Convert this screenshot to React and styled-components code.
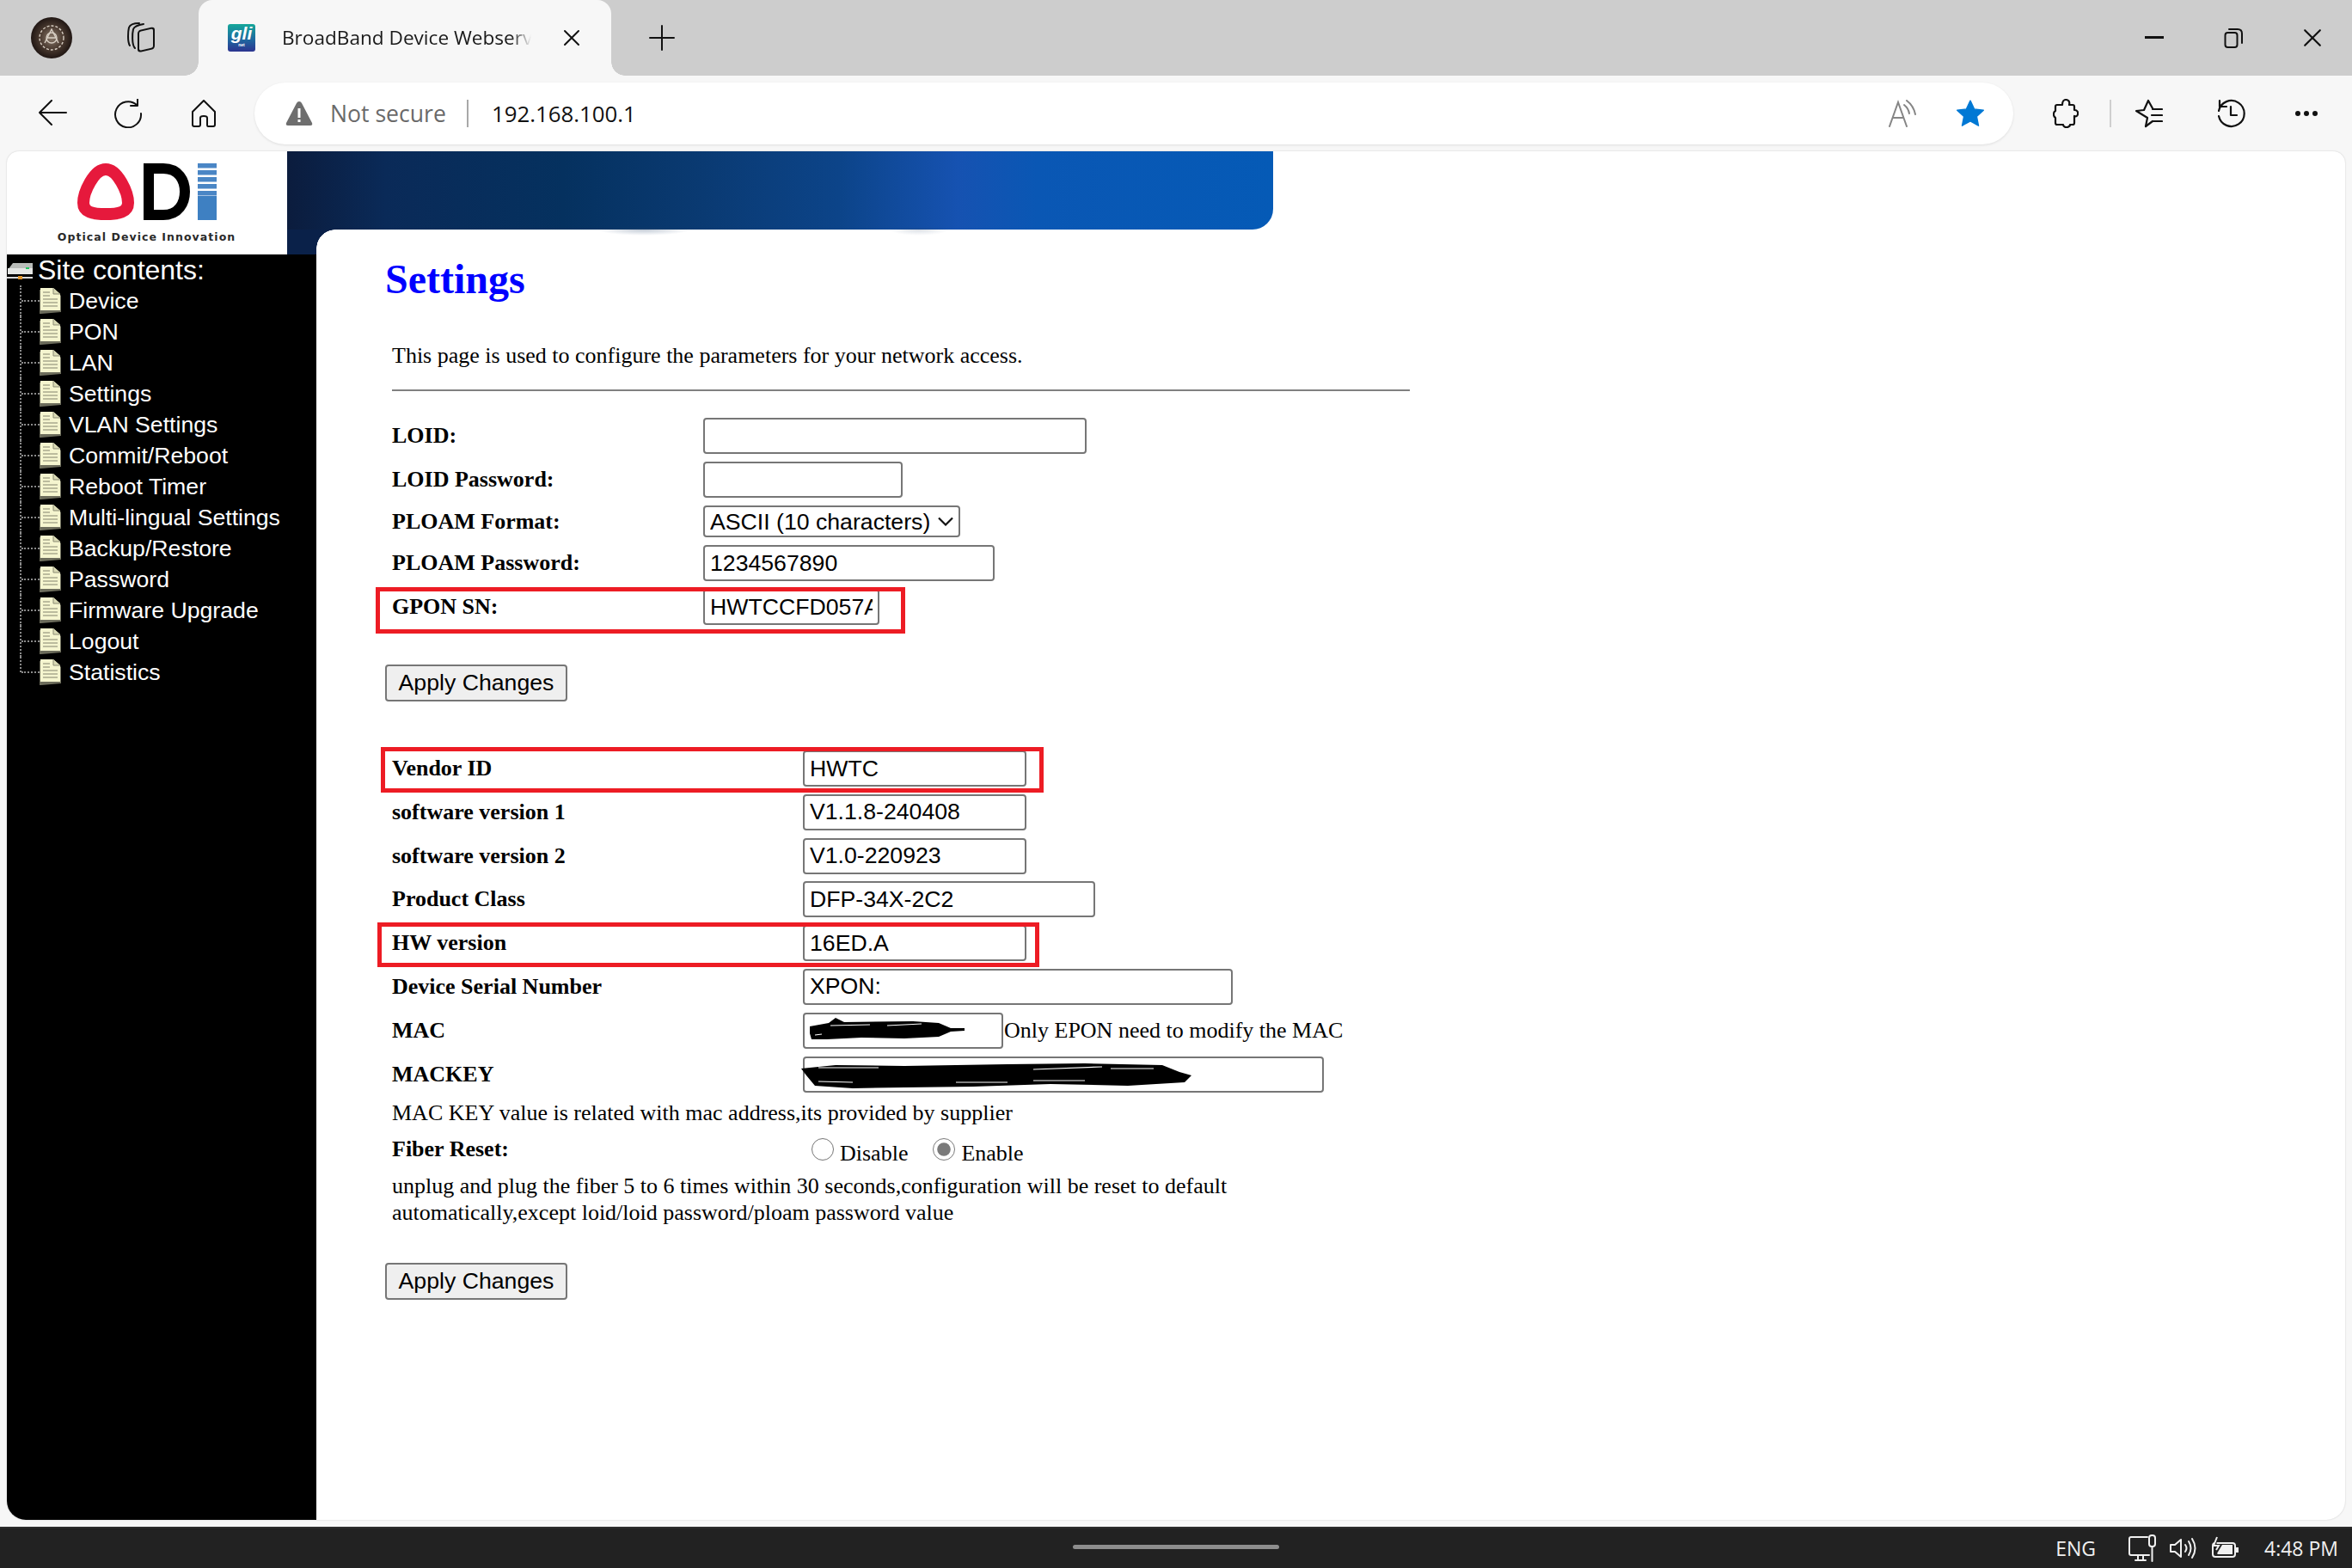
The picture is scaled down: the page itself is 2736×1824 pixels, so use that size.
import React from "react";
import styled, { createGlobalStyle } from "styled-components";

const Global = createGlobalStyle`
  html, body { margin: 0; padding: 0; width: 2736px; height: 1824px; overflow: hidden; background: #f7f7f7; }
  #root { width: 2736px; height: 1824px; }
  * { box-sizing: border-box; }
`;

const UI = `"Open Sans", "Noto Sans", "Liberation Sans", sans-serif`;
const SERIF = `"Liberation Serif", "Times New Roman", serif`;
const ARIAL = `"Liberation Sans", Arial, sans-serif`;
const CHEVRON = `url("data:image/svg+xml,%3Csvg xmlns='http://www.w3.org/2000/svg' width='18' height='11' viewBox='0 0 18 11'%3E%3Cpath d='M1 1.5 L9 9.5 L17 1.5' fill='none' stroke='%23111' stroke-width='2.2'/%3E%3C/svg%3E")`;

const Win = styled.div`
  width: 2736px; height: 1824px; display: flex; flex-direction: column; background: #f7f7f7;
`;
const TitleBar = styled.div`
  height: 88px; flex: none; background: #cdcdcd; display: flex; align-items: center;
`;
const Avatar = styled.div`
  width: 48px; height: 48px; margin-left: 36px; border-radius: 50%; flex: none; overflow: hidden;
  background: radial-gradient(circle at 50% 50%, #8a7a6c 0%, #4a3a30 40%, #1b1210 75%);
  display: flex; align-items: center; justify-content: center;
`;
const IconSlot = styled.div`
  width: ${p => p.$w || 32}px; height: ${p => p.$h || 32}px; flex: none; margin-left: ${p => (p.$auto ? "auto" : `${p.$ml || 0}px`)};
  color: ${p => p.$color || "#111"}; display: flex; align-items: center; justify-content: center;
  svg { display: block; }
`;
const Tab = styled.div`
  position: relative; width: 480px; height: 88px; margin-left: 50px; flex: none; background: #f7f7f7;
  border-radius: 16px 16px 0 0; display: flex; align-items: center; padding-left: 34px;
  &::before, &::after { content: ""; position: absolute; bottom: 0; width: 16px; height: 16px; }
  &::before { left: -16px; background: radial-gradient(circle at 0 0, transparent 15.5px, #f7f7f7 16px); }
  &::after { right: -16px; background: radial-gradient(circle at 100% 0, transparent 15.5px, #f7f7f7 16px); }
`;
const Favicon = styled.div`
  width: 32px; height: 32px; flex: none; border-radius: 3px; display: flex; flex-direction: column; align-items: center; justify-content: flex-start;
  background: linear-gradient(180deg, #15a79a 0%, #1f6aa0 55%, #2c3490 100%);
  color: #fff; font: italic bold 21px/22px ${ARIAL};
  small { font: bold 5px/5px ${ARIAL}; }
`;
const TabTitle = styled.div`
  margin-left: 31px; width: 290px; overflow: hidden; white-space: nowrap; font: 400 22.6px/32px ${UI}; color: #1a1a1a;
  -webkit-mask-image: linear-gradient(90deg, #000 92%, transparent 100%);
  mask-image: linear-gradient(90deg, #000 92%, transparent 100%);
`;
const WinControls = styled.div`
  margin-left: auto; display: flex; align-items: center; padding-right: 35px;
`;
const Toolbar = styled.div`
  height: 88px; flex: none; display: flex; align-items: center; background: #f7f7f7;
`;
const AddressBar = styled.div`
  width: 2046px; height: 72px; margin-left: 44px; flex: none; background: #fff; border-radius: 36px;
  box-shadow: 0 1px 3px rgba(0,0,0,.1); display: flex; align-items: center; padding: 0 33px 0 36px;
`;
const NotSecure = styled.span`
  margin-left: 20px; font: 400 26.6px/32px ${UI}; color: #6a6a6a;
`;
const Sep = styled.div`
  width: 2px; height: 32px; background: ${p => p.$c || "#a8a8a8"}; flex: none; margin-left: ${p => p.$ml}px;
`;
const Url = styled.span`
  margin-left: 27px; font: 400 25.8px/32px ${UI}; color: #111;
`;
const PageFrame = styled.div`
  flex: 1; min-height: 0; padding: 0 8px 8px;
`;
const Page = styled.div`
  height: 100%; background: #fff; border-radius: 14px 14px 22px 22px; overflow: hidden; display: flex; flex-direction: column;
  box-shadow: 0 0 2px rgba(0,0,0,.2);
`;
const Header = styled.div`
  height: 120px; flex: none; display: flex;
`;
const LogoCell = styled.div`
  width: 326px; flex: none; display: flex; flex-direction: column; align-items: center; padding: 14px 1px 0 0;
`;
const LogoCaption = styled.div`
  margin-top: 11px; font: bold 12.5px/18px "DejaVu Sans", sans-serif; letter-spacing: 1.05px; color: #2a2a2a; white-space: nowrap;
`;
const BannerWrap = styled.div`
  width: 1147px; flex: none; display: flex; flex-direction: column; position: relative;
`;
const Band = styled.div`
  height: 91px; flex: none; border-radius: 0 0 24px 0;
  background: linear-gradient(90deg, #0b1c3d 0%, #0a2a58 10%, #05315f 28%, #0a3a72 42%, #0c4489 56%, #1652b1 68%, #0a57b4 76%, #055ab6 100%);
`;
const Stub = styled.div`
  position: relative; width: 34px; flex: 1; background: #0a2149;
  &::after {
    content: ""; position: absolute; left: 100%; top: 0; width: 22px; height: 22px;
    background: radial-gradient(circle at 100% 100%, transparent 21.5px, #0a2149 22px);
  }
`;
const Smudge = styled.div`
  position: absolute; left: ${p => p.$l}px; top: 89px; width: ${p => p.$w}px; height: 9px;
  background: radial-gradient(ellipse at 50% 20%, rgba(40,70,110,${p => p.$a}), transparent 70%);
`;
const Main = styled.div`
  flex: 1; min-height: 0; display: flex;
`;
const Sidebar = styled.nav`
  width: 360px; flex: none; background: #000; color: #fff; font-family: ${ARIAL};
`;
const RootRow = styled.div`
  height: 36px; display: flex; align-items: center; font-size: 32px; line-height: 35px; white-space: nowrap;
  span { margin-left: 6px; }
`;
const TreeList = styled.ul`
  list-style: none; margin: 0 0 0 15px; padding: 0;
`;
const TreeRow = styled.li`
  position: relative; height: 36px; display: flex; align-items: center; font-size: 26.67px; white-space: nowrap;
  &::before {
    content: ""; position: absolute; left: 0; top: 0; height: ${p => (p.$last ? "50%" : "100%")};
    border-left: 2px dotted #8a8a8a;
  }
`;
const Connector = styled.div`
  width: 21px; flex: none; margin-left: 2px; border-top: 2px dotted #8a8a8a;
`;
const TreeLabel = styled.span`
  margin-left: 9px;
`;
const Content = styled.main`
  flex: 1; min-width: 0; padding: 1px 0 0 79px; font-family: ${SERIF}; color: #000;
`;
const Title = styled.h2`
  margin: 0 0 0 1px; font: bold 48px/55px ${SERIF}; color: #00f;
`;
const Intro = styled.p`
  margin: 48px 0 0 9px; font-size: 26px; line-height: 28px; white-space: nowrap;
`;
const Rule = styled.hr`
  width: 1184px; height: 2px; margin: 25px 0 31px 9px; border: 0; background: #808080;
`;
const Fields = styled.div`
  margin: ${p => p.$mt || 0}px 0 0 9px; display: flex; flex-direction: column; gap: ${p => p.$gap}px;
`;
const Row = styled.div`
  position: relative; display: flex; align-items: center; min-height: 37px;
`;
const Label = styled.label`
  width: ${p => p.$w}px; flex: none; font: bold 26px/28px ${SERIF};
`;
const Box = styled.input`
  width: ${p => p.$w}px; height: 42px; flex: none; border: 2.6px solid #767676; border-radius: 4px; background: #fff;
  padding: 0 6px; font: 26.67px ${ARIAL}; color: #000; outline: none; margin: 0;
`;
const Picker = styled.select`
  appearance: none; width: 299px; height: 37px; flex: none; border: 2.6px solid #767676; border-radius: 4px;
  background: #fff ${CHEVRON} no-repeat right 6px center;
  padding: 0 0 0 6px; font: 26.67px ${ARIAL}; color: #000; margin: 0;
`;
const Highlight = styled.div`
  position: absolute; left: ${p => p.$l}px; top: ${p => p.$t}px; width: ${p => p.$w}px; height: ${p => p.$h}px;
  border: 5px solid #ed1c24; pointer-events: none;
`;
const Apply = styled.button`
  display: block; width: 212px; height: 43px; margin: ${p => p.$mt}px 0 0 1px; padding: 0; border: 2.6px solid #767676; border-radius: 4px;
  background: #efefef; font: 26.67px ${ARIAL}; color: #000;
`;
const Redacted = styled.div`
  position: relative; flex: none; display: flex;
  svg { position: absolute; left: ${p => p.$l}px; top: ${p => p.$t}px; }
`;
const Hint = styled.span`
  font-size: 26px; line-height: 28px; margin-left: 1px; white-space: nowrap;
`;
const Note = styled.p`
  margin: ${p => p.$mt}px 0 0 9px; font-size: 26px; line-height: ${p => p.$lh}px; white-space: nowrap;
`;
const FiberRow = styled.div`
  margin: 12px 0 0 9px; height: 32px; display: flex; align-items: center;
`;
const Radio = styled.input`
  width: 26px; height: 26px; margin: 0 ${p => p.$mr}px 0 ${p => p.$ml}px; accent-color: #7a7a7a; flex: none;
`;
const RadioText = styled.span`
  font-size: 26px; line-height: 28px; position: relative; top: 5px;
`;
const Taskbar = styled.footer`
  position: relative; height: 48px; flex: none; background: #222222; border-top: 2px solid #2c2c2c; display: flex; align-items: center;
  justify-content: flex-end; color: #f0f0f0; padding-right: 16px; font-family: ${UI};
`;
const HomeBar = styled.div`
  position: absolute; left: 1248px; top: 19px; width: 240px; height: 5px; border-radius: 3px; background: #8d8d8d;
`;
const TrayText = styled.span`
  font-size: 23px; line-height: 30px; margin: 0 ${p => p.$mr || 0}px 0 ${p => p.$ml || 0}px;
`;

const S = { fill: "none", stroke: "currentColor", strokeWidth: 2, strokeLinecap: "round", strokeLinejoin: "round" };

const Collections = () => (
  <svg width="34" height="36" viewBox="0 0 34 36" {...S}>
    <rect x="14" y="9" width="18" height="24" rx="3" transform="skewY(-12) translate(0 4)" />
    <path d="M10 30 C6 26 7 12 8 8 C9 5 14 3 20 2" />
    <path d="M4 27 C1 22 2 10 3 6 C4 3 9 1 15 1" />
  </svg>
);
const CloseX = ({ s = 20 }) => (
  <svg width={s} height={s} viewBox="0 0 20 20" {...S}><path d="M2 2 L18 18 M18 2 L2 18" /></svg>
);
const Plus = () => <svg width="30" height="30" viewBox="0 0 30 30" {...S}><path d="M15 1 V29 M1 15 H29" /></svg>;
const Back = () => <svg width="34" height="32" viewBox="0 0 34 32" {...S}><path d="M2 15 H33 M16 1 L2 15 L16 29" /></svg>;
const Refresh = () => (
  <svg width="34" height="34" viewBox="0 0 34 34" {...S}><path d="M27 7 A15 15 0 1 0 32 17" /><path d="M28 0 V8 H20" /></svg>
);
const Home = () => (
  <svg width="30" height="32" viewBox="0 0 30 32" {...S}><path d="M15 1 L28 14 V29 Q28 31 26 31 H20 Q19 31 19 29 V21 Q19 19 15 19 Q11 19 11 21 V29 Q11 31 9 31 H4 Q2 31 2 29 V14 Z" /></svg>
);
const Warning = () => (
  <svg width="32" height="30" viewBox="0 0 32 30">
    <path d="M16 1 Q18 1 19 3 L31 26 Q32 29 29 29 H3 Q0 29 1 26 L13 3 Q14 1 16 1Z" fill="#6e6e6e" />
    <rect x="14.5" y="9" width="3" height="11" fill="#fff" /><rect x="14.5" y="22" width="3" height="3" fill="#fff" />
  </svg>
);
const ReadAloud = () => (
  <svg width="32" height="32" viewBox="0 0 32 32" fill="none" stroke="#858585" strokeWidth="2" strokeLinecap="round">
    <path d="M1 31 L11 3 L21 31 M5 21 H17" /><path d="M18 6 Q23 10 24 16" /><path d="M21 1 Q29 7 31 17" />
  </svg>
);
const Star = () => (
  <svg width="34" height="34" viewBox="0 0 24 24"><path d="M12 1.5 L15.2 8.4 L22.8 9.3 L17.2 14.4 L18.7 22 L12 18.2 L5.3 22 L6.8 14.4 L1.2 9.3 L8.8 8.4Z" fill="#0078d4" stroke="#0078d4" strokeWidth="1" strokeLinejoin="round" /></svg>
);
const PuzzleIcon = () => (
  <svg width="30" height="34" viewBox="0 0 30 34" {...S} strokeWidth="2.2">
    <path d="M5 7 H11 C11 3 13 1 15 1 C18 1 20 3 19 7 H23 Q25 7 25 9 V13 C29 13 29.5 16 29 18 C28.5 20 27 21 25 20 V28 Q25 30 23 30 H20 C20 33 15 34 13 32 C12 31 12 30 12 30 H5 Q3 30 3 28 V22 C0 20 0.5 15 3 14 V9 Q3 7 5 7Z" />
  </svg>
);
const FavList = () => (
  <svg width="34" height="34" viewBox="0 0 34 34" {...S} strokeWidth="2.2">
    <path d="M14 32 L16 22 L3 14 L12 13 L17 2 L22 11" /><path d="M14 32 L22 26" /><path d="M22 12 H33 M21 19 H33 M23 26 H33" />
  </svg>
);
const History = () => (
  <svg width="34" height="34" viewBox="0 0 34 34" {...S} strokeWidth="2.2">
    <path d="M3 14 A15 15 0 1 1 3 20" /><path d="M4 2 V9 L12 9" /><path d="M17 9 V19 H24" />
  </svg>
);
const Dots = () => (
  <svg width="28" height="8" viewBox="0 0 28 8" fill="currentColor"><circle cx="4" cy="4" r="3" /><circle cx="14" cy="4" r="3" /><circle cx="24" cy="4" r="3" /></svg>
);
const Minimize = () => <svg width="22" height="4" viewBox="0 0 22 4"><rect width="22" height="3" fill="currentColor" /></svg>;
const Restore = () => (
  <svg width="22" height="24" viewBox="0 0 22 24" {...S}><rect x="1.5" y="6" width="14" height="17" rx="3" /><path d="M6 2 H16 Q21 2 21 7 V18" /></svg>
);

const Root = () => (
  <svg width="30" height="24" viewBox="0 0 30 24">
    <path d="M1 12 L7 4 H30 V12 Z" fill="#b9bcb9" /><rect x="1" y="10" width="29" height="7" fill="#e4e6e4" />
    <rect x="22" y="9" width="4" height="2" fill="#22c55e" /><rect x="0" y="20" width="30" height="2" fill="#d8d8d8" />
    <rect x="13" y="19" width="5" height="4" fill="#e0952b" />
  </svg>
);
const FileIcon = () => (
  <svg width="25" height="30" viewBox="0 0 25 30">
    <path d="M0 2 H17 L25 9 V28 L2 30 H0Z" fill="#6d6d5c" />
    <path d="M1 0 H16 L24 7 V26 H1Z" fill="#f5f5cf" />
    <path d="M16 0 V7 H24" fill="#dadab5" stroke="#8b8b75" strokeWidth="1" />
    <path d="M4 5 H12 M4 9 H12 M4 13 H21 M4 17 H21 M4 21 H21" stroke="#a9a98e" strokeWidth="1.6" />
  </svg>
);
const Logo = () => (
  <svg width="162" height="66" viewBox="0 0 162 66">
    <path d="M33 7 C47 7 59 34 59 46 C59 57 48 59 33 59 C18 59 7 57 7 46 C7 34 19 7 33 7Z" fill="none" stroke="#e6193c" strokeWidth="14" strokeLinejoin="round" />
    <path d="M83 6 H100 C118 6 125 20 125 33 C125 46 118 60 100 60 H83 Z" fill="none" stroke="#000" strokeWidth="12" />
    {[0, 8, 16, 24, 32].map(y => <rect key={y} x="140" y={y} width="22" height="5.5" fill="#4a86c5" />)}
    <rect x="140" y="38" width="22" height="28" fill="#3e80c2" />
  </svg>
);
const Scribble = ({ w, h, d, light }) => (
  <svg width={w} height={h} viewBox={`0 0 ${w} ${h}`}>
    <path d={d} fill="#000" />
    <path d={light} fill="none" stroke="#fff" strokeWidth="1.2" />
  </svg>
);

const tree = ["Device","PON","LAN","Settings","VLAN Settings","Commit/Reboot","Reboot Timer","Multi-lingual Settings","Backup/Restore","Password","Firmware Upgrade","Logout","Statistics"];

export default function App() {
  return (
    <Win>
      <Global />
      <TitleBar>
        <Avatar>
          <svg width="36" height="36" viewBox="0 0 36 36" fill="none" stroke="#d8cfc4" strokeWidth="1.4">
            <circle cx="18" cy="18" r="14" strokeDasharray="3 2" /><path d="M10 24 L18 8 L26 24 M13 18 H23" /><circle cx="18" cy="18" r="6" />
          </svg>
        </Avatar>
        <IconSlot $w={34} $h={36} $ml={63}><Collections /></IconSlot>
        <Tab>
          <Favicon>gli<small>net</small></Favicon>
          <TabTitle>BroadBand Device Webserver</TabTitle>
          <IconSlot $w={20} $h={20} $ml={37}><CloseX /></IconSlot>
        </Tab>
        <IconSlot $w={30} $h={30} $ml={44}><Plus /></IconSlot>
        <WinControls>
          <IconSlot $w={22} $h={4}><Minimize /></IconSlot>
          <IconSlot $w={22} $h={24} $ml={70}><Restore /></IconSlot>
          <IconSlot $w={22} $h={22} $ml={70}><CloseX s={22} /></IconSlot>
        </WinControls>
      </TitleBar>
      <Toolbar>
        <IconSlot $w={34} $ml={44}><Back /></IconSlot>
        <IconSlot $w={34} $h={34} $ml={54}><Refresh /></IconSlot>
        <IconSlot $w={30} $ml={56}><Home /></IconSlot>
        <AddressBar>
          <IconSlot $color="#6e6e6e"><Warning /></IconSlot>
          <NotSecure>Not secure</NotSecure>
          <Sep $ml={24} />
          <Url>192.168.100.1</Url>
          <IconSlot $auto><ReadAloud /></IconSlot>
          <IconSlot $w={34} $h={34} $ml={46}><Star /></IconSlot>
        </AddressBar>
        <IconSlot $w={30} $h={34} $ml={46}><PuzzleIcon /></IconSlot>
        <Sep $c="#cfcfcf" $ml={36} />
        <IconSlot $w={34} $h={34} $ml={26}><FavList /></IconSlot>
        <IconSlot $w={34} $h={34} $ml={62}><History /></IconSlot>
        <IconSlot $w={28} $h={8} $ml={57}><Dots /></IconSlot>
      </Toolbar>
      <PageFrame>
        <Page>
          <Header>
            <LogoCell>
              <Logo />
              <LogoCaption>Optical Device Innovation</LogoCaption>
            </LogoCell>
            <BannerWrap>
              <Band />
              <Stub />
              <Smudge $l={360} $w={110} $a={0.3} />
              <Smudge $l={700} $w={70} $a={0.18} />
            </BannerWrap>
          </Header>
          <Main>
            <Sidebar>
              <RootRow><Root /><span>Site contents:</span></RootRow>
              <TreeList>
                {tree.map((t, i) => (
                  <TreeRow key={t} $last={i === tree.length - 1}>
                    <Connector /><FileIcon /><TreeLabel>{t}</TreeLabel>
                  </TreeRow>
                ))}
              </TreeList>
            </Sidebar>
            <Content>
              <Title>Settings</Title>
              <Intro>This page is used to configure the parameters for your network access.</Intro>
              <Rule />
              <Fields $gap={9}>
                <Row><Label $w={362}>LOID:</Label><Box $w={446} readOnly value="" /></Row>
                <Row><Label $w={362}>LOID Password:</Label><Box $w={232} readOnly value="" /></Row>
                <Row><Label $w={362}>PLOAM Format:</Label>
                  <Picker defaultValue="ascii"><option value="ascii">ASCII (10 characters)</option></Picker></Row>
                <Row><Label $w={362}>PLOAM Password:</Label><Box $w={339} readOnly value="1234567890" /></Row>
                <Row><Label $w={362}>GPON SN:</Label><Box $w={205} readOnly value="HWTCCFD057AB" />
                  <Highlight $l={-19} $t={-2} $w={616} $h={54} /></Row>
              </Fields>
              <Apply $mt={46}>Apply Changes</Apply>
              <Fields $gap={8.8} $mt={57}>
                <Row><Label $w={478}>Vendor ID</Label><Box $w={260} readOnly value="HWTC" />
                  <Highlight $l={-13} $t={-4} $w={771} $h={53} /></Row>
                <Row><Label $w={478}>software version 1</Label><Box $w={260} readOnly value="V1.1.8-240408" /></Row>
                <Row><Label $w={478}>software version 2</Label><Box $w={260} readOnly value="V1.0-220923" /></Row>
                <Row><Label $w={478}>Product Class</Label><Box $w={340} readOnly value="DFP-34X-2C2" /></Row>
                <Row><Label $w={478}>HW version</Label><Box $w={260} readOnly value="16ED.A" />
                  <Highlight $l={-17} $t={-3} $w={770} $h={52} /></Row>
                <Row><Label $w={478}>Device Serial Number</Label><Box $w={500} readOnly value="XPON:" /></Row>
                <Row><Label $w={478}>MAC</Label>
                  <Redacted $l={8} $t={6}>
                    <Box $w={233} readOnly value="" />
                    <Scribble w={180} h={26} d="M0 10 L22 6 L30 0 L40 5 L120 4 L150 6 L164 12 L180 12 L180 15 L164 16 L150 22 L110 24 L60 23 L20 25 L2 25 L0 18Z" light="M24 9 L70 8 M90 9 L130 7 M6 20 L14 19" />
                  </Redacted>
                  <Hint>Only EPON need to modify the MAC</Hint></Row>
                <Row><Label $w={478}>MACKEY</Label>
                  <Redacted $l={-2} $t={8}>
                    <Box $w={606} readOnly value="" />
                    <Scribble w={454} h={29} d="M0 6 L40 2 L120 3 L240 1 L330 0 L420 2 L440 10 L454 14 L446 22 L380 26 L290 24 L200 27 L120 28 L60 29 L16 26 L6 14Z" light="M20 5 L90 5 M270 7 L350 4 M360 6 L410 6 M20 21 L60 22 M180 22 L240 22 M270 20 L330 20" />
                  </Redacted></Row>
              </Fields>
              <Note $mt={10} $lh={28}>MAC KEY value is related with mac address,its provided by supplier</Note>
              <FiberRow>
                <Label $w={478}>Fiber Reset:</Label>
                <Radio type="radio" name="fiber" readOnly $ml={10} $mr={7} />
                <RadioText>Disable</RadioText>
                <Radio type="radio" name="fiber" readOnly defaultChecked $ml={29} $mr={7} />
                <RadioText>Enable</RadioText>
              </FiberRow>
              <Note $mt={11} $lh={31}>unplug and plug the fiber 5 to 6 times within 30 seconds,configuration will be reset to default<br />automatically,except loid/loid password/ploam password value</Note>
              <Apply $mt={43}>Apply Changes</Apply>
            </Content>
          </Main>
        </Page>
      </PageFrame>
      <Taskbar>
        <HomeBar />
        <TrayText $mr={38}>ENG</TrayText>
        <IconSlot $w={32} $h={32} $color="#f0f0f0">
          <svg width="32" height="32" viewBox="0 0 32 32" fill="none" stroke="currentColor" strokeWidth="2" strokeLinecap="round" strokeLinejoin="round">
            <path d="M22 3 H3 Q1 3 1 5 V22 Q1 24 3 24 H24" /><path d="M8 30 H20 M11 24 V30 M17 24 V30" /><rect x="24" y="1" width="7" height="13" rx="3" /><path d="M27.5 14 V31" />
          </svg>
        </IconSlot>
        <IconSlot $w={32} $h={24} $ml={16} $color="#f0f0f0">
          <svg width="32" height="24" viewBox="0 0 32 24" fill="none" stroke="currentColor" strokeWidth="2" strokeLinecap="round" strokeLinejoin="round">
            <path d="M1 8 H6 L13 2 V22 L6 16 H1Z" /><path d="M18 8 Q21 12 18 16" /><path d="M22 4 Q27 12 22 20" /><path d="M26 1 Q33 12 26 23" />
          </svg>
        </IconSlot>
        <IconSlot $w={32} $h={28} $ml={17} $color="#f0f0f0">
          <svg width="32" height="28" viewBox="0 0 32 28" fill="none" stroke="currentColor" strokeWidth="2">
            <rect x="1" y="8" width="26" height="16" rx="3" /><rect x="28" y="13" width="3" height="6" fill="currentColor" stroke="none" /><path d="M6 20 L12 10 H24 V21 H7Z" fill="currentColor" stroke="none" /><path d="M6 1 L2 11 H8 L5 16" fill="#222" strokeWidth="2" />
          </svg>
        </IconSlot>
        <TrayText $ml={29}>4:48 PM</TrayText>
      </Taskbar>
    </Win>
  );
}
